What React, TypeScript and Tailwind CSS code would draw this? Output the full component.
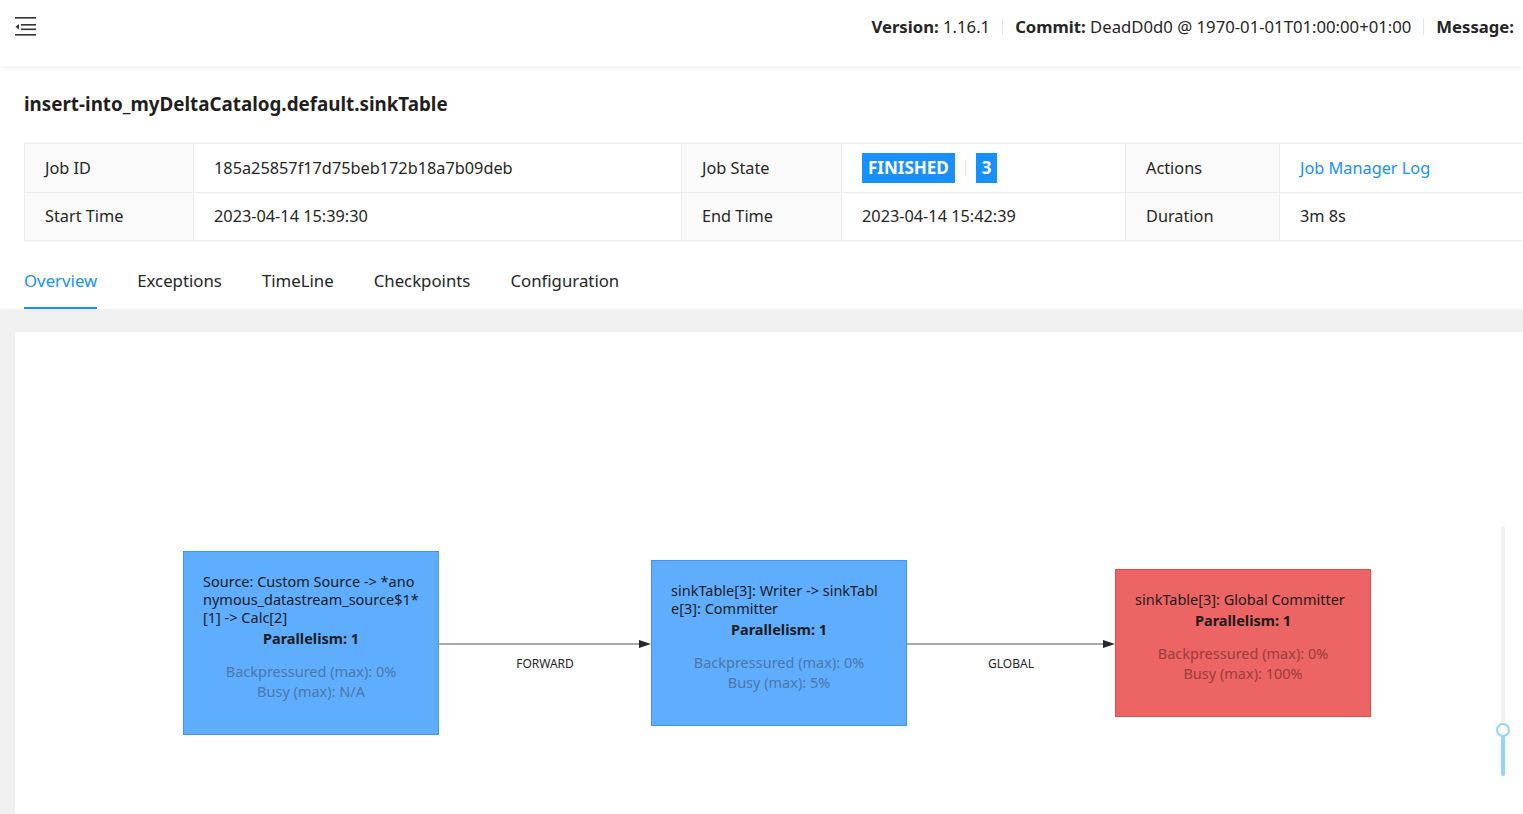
import React from 'react';

const font = { fontFamily: '"Noto Sans", "Liberation Sans", sans-serif' };

function MenuFoldIcon() {
  return (
    <svg width="22" height="20" viewBox="0 0 22 20" className="text-[#333]">
      <rect x="0" y="0" width="21" height="1.6" fill="currentColor" />
      <rect x="6" y="7" width="15" height="1.6" fill="currentColor" />
      <rect x="6" y="11.5" width="15" height="1.6" fill="currentColor" />
      <rect x="0" y="17" width="21" height="1.6" fill="currentColor" />
      <path d="M0.5 9.8 L4 7 L4 12.6 Z" fill="currentColor" />
    </svg>
  );
}

type NodeProps = {
  left: number;
  top: number;
  lines: string[];
  busy: string;
  red?: boolean;
};

function GraphNode({ left, top, lines, busy, red }: NodeProps) {
  return (
    <div
      className={
        'absolute w-[256px] border px-[19px] pt-[20px] pb-[33px] text-[14.5px] ' +
        (red ? 'bg-[#ed6464] border-[#e54a4a]' : 'bg-[#5fadff] border-[#3f96f2]')
      }
      style={{ left, top }}
    >
      <div className="text-[#1c1c1c] leading-[18px]">
        {lines.map((l) => (
          <div key={l} className="whitespace-nowrap">{l}</div>
        ))}
      </div>
      <div className="mt-[2px] text-center font-bold text-[#1c1c1c] leading-[21px]">Parallelism: 1</div>
      <div className={'mt-[12px] text-center leading-[20px] ' + (red ? 'text-[#9a3d3d]' : 'text-[#4d77a6]')}>
        <div>Backpressured (max): 0%</div>
        <div>Busy (max): {busy}</div>
      </div>
    </div>
  );
}

function Edge({ x1, x2, y, label }: { x1: number; x2: number; y: number; label: string }) {
  const mid = (x1 + x2) / 2;
  return (
    <g>
      <line x1={x1} y1={y} x2={x2 - 10} y2={y} stroke="#8c8c8c" strokeWidth="1.5" />
      <path d={`M${x2} ${y} L${x2 - 12} ${y - 4} L${x2 - 12} ${y + 4} Z`} fill="#262626" />
      <text x={mid} y={y + 24} textAnchor="middle" fontSize="12" fill="#262626" style={font}>
        {label}
      </text>
    </g>
  );
}

export default function App() {
  const label = 'bg-[#fafafa] px-[20px] flex items-center border-r border-[#ececec]';
  const value = 'px-[20px] flex items-center border-r border-[#ececec]';
  const tag = 'bg-[#1890ff] text-white font-bold text-[17px] h-[30px] px-[6px] flex items-center';

  return (
    <div className="w-screen h-screen overflow-hidden bg-white text-[#262626] flex flex-col" style={font}>
      {/* Header */}
      <header className="h-[66px] shrink-0 flex items-center justify-between pl-[15px] pr-[9px] shadow-[0_2px_6px_rgba(0,0,0,0.06)] relative z-10">
        <div className="-mt-[12px]">
          <MenuFoldIcon />
        </div>
        <div className="flex items-center text-[16.7px] -mt-[12px]">
          <span><b className="font-bold">Version:</b> 1.16.1</span>
          <span className="mx-[12px] h-[16px] w-px bg-[#e5e5e5]" />
          <span><b className="font-bold">Commit:</b> DeadD0d0 @ 1970-01-01T01:00:00+01:00</span>
          <span className="mx-[12px] h-[16px] w-px bg-[#e5e5e5]" />
          <span><b className="font-bold">Message:</b></span>
        </div>
      </header>

      {/* Title */}
      <div className="px-[24px] pt-[26px] pb-[27px]">
        <h1 className="text-[18.8px] leading-[24px] font-bold text-[#1f1f1f]">
          insert-into_myDeltaCatalog.default.sinkTable
        </h1>
      </div>

      {/* Descriptions */}
      <div className="pl-[24px] overflow-hidden">
        <div className="w-[1600px] border-t border-l border-b border-[#ececec] text-[16.3px]">
          <div className="grid grid-cols-[169px_488px_160px_284px_154px_345px] h-[49px] border-b border-[#ececec]">
            <div className={label}>Job ID</div>
            <div className={value}>185a25857f17d75beb172b18a7b09deb</div>
            <div className={label}>Job State</div>
            <div className={value}>
              <span className={tag}>FINISHED</span>
              <span className="mx-[10px] h-[16px] w-px bg-[#e5e5e5]" />
              <span className={tag}>3</span>
            </div>
            <div className={label}>Actions</div>
            <div className={value + ' text-[#1890ff]'}>Job Manager Log</div>
          </div>
          <div className="grid grid-cols-[169px_488px_160px_284px_154px_345px] h-[47px]">
            <div className={label}>Start Time</div>
            <div className={value}>2023-04-14 15:39:30</div>
            <div className={label}>End Time</div>
            <div className={value}>2023-04-14 15:42:39</div>
            <div className={label}>Duration</div>
            <div className={value}>3m 8s</div>
          </div>
        </div>
      </div>

      {/* Tabs */}
      <nav className="flex gap-[40px] px-[24px] mt-[16px] text-[16.8px]">
        {['Overview', 'Exceptions', 'TimeLine', 'Checkpoints', 'Configuration'].map((t, i) => (
          <div
            key={t}
            className={
              'pt-[12px] pb-[14px] leading-[24px] border-b-2 ' +
              (i === 0 ? 'text-[#1890ff] border-[#1890ff]' : 'text-[#262626] border-transparent')
            }
          >
            {t}
          </div>
        ))}
      </nav>

      {/* Graph area */}
      <div className="flex-1 bg-[#f0f0f0] pl-[15px] pt-[23px] flex">
        <div className="flex-1 bg-white relative">
          <svg className="absolute inset-0 w-full h-full">
            <Edge x1={424} x2={636} y={312} label="FORWARD" />
            <Edge x1={892} x2={1100} y={312} label="GLOBAL" />
          </svg>
          <GraphNode
            left={168}
            top={219}
            lines={['Source: Custom Source -> *ano', 'nymous_datastream_source$1*', '[1] -> Calc[2]']}
            busy="N/A"
          />
          <GraphNode
            left={636}
            top={228}
            lines={['sinkTable[3]: Writer -> sinkTabl', 'e[3]: Committer']}
            busy="5%"
          />
          <GraphNode
            left={1100}
            top={237}
            lines={['sinkTable[3]: Global Committer']}
            busy="100%"
            red
          />

          {/* Zoom slider */}
          <div className="absolute left-[1486px] top-[194px] w-[4px] h-[250px] rounded-full bg-[#f2f2f2]">
            <div className="absolute left-0 bottom-0 w-[4px] h-[46px] rounded-full bg-[#91d5ff]" />
            <div className="absolute -left-[5px] top-[197px] w-[14px] h-[14px] rounded-full border-2 border-[#91d5ff] bg-white" />
          </div>
        </div>
      </div>
    </div>
  );
}
